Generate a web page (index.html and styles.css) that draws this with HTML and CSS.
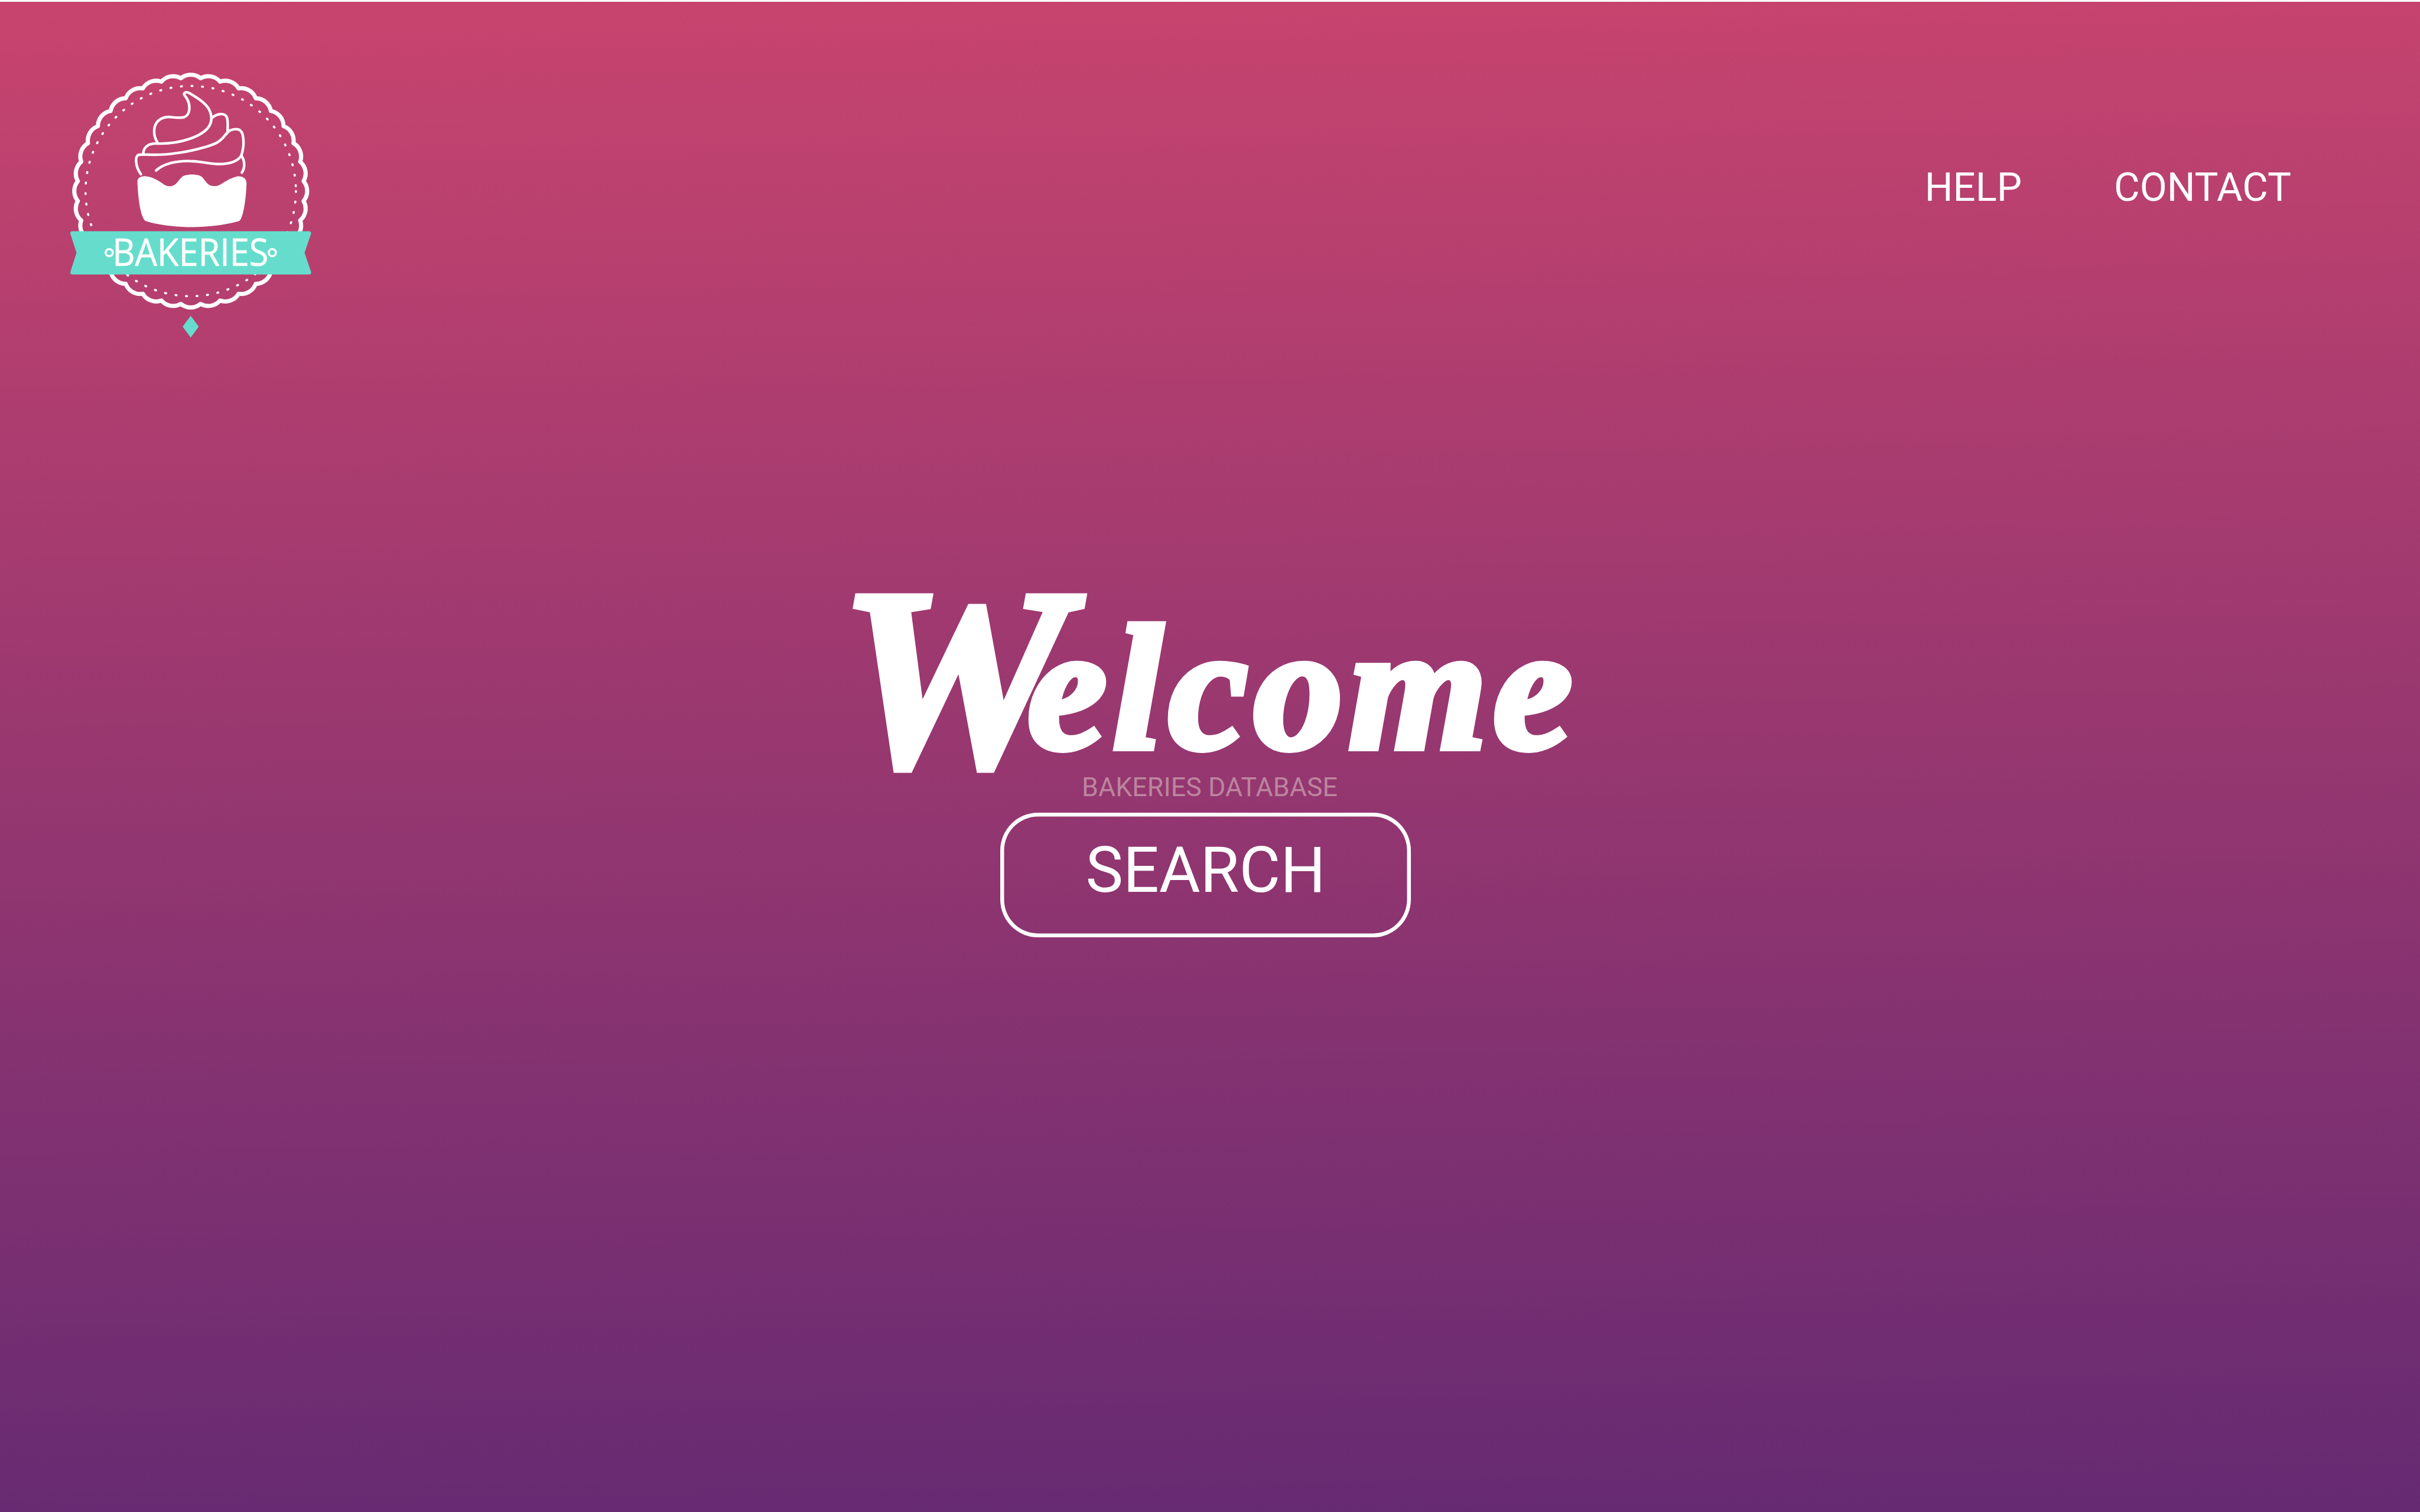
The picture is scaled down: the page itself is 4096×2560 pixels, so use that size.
FILE: index.html
```html
<!DOCTYPE html>
<html lang="en">
<head>
<meta charset="utf-8">
<title>Bakeries</title>
<link rel="stylesheet" href="styles.css">
</head>
<body>
<header class="header">
  <svg class="logo" viewBox="0 0 580 640" role="img" aria-label="Bakeries">
    <g transform="translate(290.4 290.7)" fill="none" stroke="#fff">
      <path stroke-width="9.2" stroke-linejoin="round" d="M-21.8-249A34 34 0 0 1 21.8-249A34 34 0 0 1 64.7-241.5A34 34 0 0 1 105.7-226.6A34 34 0 0 1 143.4-204.8A34 34 0 0 1 176.8-176.8A34 34 0 0 1 204.8-143.4A34 34 0 0 1 226.6-105.7A34 34 0 0 1 241.5-64.7A34 34 0 0 1 249-21.8A34 34 0 0 1 249 21.8A34 34 0 0 1 241.5 64.7A34 34 0 0 1 226.6 105.7A34 34 0 0 1 204.8 143.4A34 34 0 0 1 176.8 176.8A34 34 0 0 1 143.4 204.8A34 34 0 0 1 105.7 226.6A34 34 0 0 1 64.7 241.5A34 34 0 0 1 21.8 249A34 34 0 0 1-21.8 249A34 34 0 0 1-64.7 241.5A34 34 0 0 1-105.7 226.6A34 34 0 0 1-143.4 204.8A34 34 0 0 1-176.8 176.8A34 34 0 0 1-204.8 143.4A34 34 0 0 1-226.6 105.7A34 34 0 0 1-241.5 64.7A34 34 0 0 1-249 21.8A34 34 0 0 1-249-21.8A34 34 0 0 1-241.5-64.7A34 34 0 0 1-226.6-105.7A34 34 0 0 1-204.8-143.4A34 34 0 0 1-176.8-176.8A34 34 0 0 1-143.4-204.8A34 34 0 0 1-105.7-226.6A34 34 0 0 1-64.7-241.5A34 34 0 0 1-21.8-249Z"/>
      <circle r="232" stroke-width="4.8" stroke-linecap="round" stroke-dasharray="2 21.29"/>
    </g>
    <g transform="scale(.3699 .40816)">
      <g class="cream">
        <path d="M586 448C566 420 565 388 570 366C580 330 618 308 665 312C705 316 722 318 745 313C785 300 783 247 764 215C750 193 740 190 748 182C755 175 770 179 780 184C830 211 870 234 893 268C910 298 913 332 897 358C860 416 720 460 585 455C540 453 502 470 502 512"/>
        <path d="M911 318C935 295 985 285 1000 312C1009 330 1005 350 1005 390"/>
        <path d="M488 621C455 580 450 525 475 516C490 511 600 523 690 508C780 500 900 470 940 451C985 430 990 400 1020 384C1060 370 1085 378 1094 405C1105 445 1098 490 1086 522C1060 555 1010 568 940 566C880 562 830 550 780 550C700 548 620 565 579 601"/>
        <path d="M1088 522C1110 550 1108 590 1090 612"/>
      </g>
      <path fill="#fff" d="M467 660C467 640 490 630 520 632C560 637 595 658 615 670C640 690 675 692 697 672C715 658 725 636 745 629C775 621 810 621 840 629C865 638 872 668 898 680C925 690 950 685 970 672C1005 652 1030 640 1060 633C1095 628 1118 645 1118 668C1116 730 1105 830 1082 866Q1078 874 1065 877C900 917 690 917 525 877Q512 874 508 867C480 830 470 730 467 660Z"/>
      <path fill="#66ddcc" d="M80 929H1490Q1504 929 1503 942L1464 1046L1503 1150Q1504 1163 1490 1163H80Q66 1163 67 1150L104 1046L67 942Q66 929 80 929ZM785 1387L833 1445L785 1504L737 1445Z"/>
    </g>
    <g fill="none" stroke="#fff" stroke-width="4.5">
      <circle cx="110.6" cy="426.5" r="7.9"/>
      <circle cx="470.4" cy="426.5" r="7.9"/>
    </g>
    <text class="logo-name" x="117.5" y="455.4" textLength="344.5" lengthAdjust="spacingAndGlyphs">BAKERIES</text>
  </svg>
  <nav class="nav">
    <a>HELP</a>
    <a>CONTACT</a>
  </nav>
</header>
<main class="hero">
  <h1 class="title"><span class="title-initial">W</span><span class="title-rest">elcome</span></h1>
  <p class="subtitle">BAKERIES DATABASE</p>
  <button class="search">SEARCH</button>
</main>
</body>
</html>
```
FILE: styles.css
```css
* { box-sizing: border-box; }

body {
  margin: 0;
  height: 2560px;
  border-top: 3px solid #fff;
  background: linear-gradient(179deg, #c8446e 0%, #652a72 100%) no-repeat;
  color: #fff;
  font-family: Roboto, sans-serif;
  overflow: hidden;
}

.header {
  display: flex;
  justify-content: space-between;
  align-items: flex-start;
  height: 589px;
  padding: 97px 218px 0 100px;
}

.logo { display: block; width: 445px; height: 492px; }

.cream path {
  fill: none;
  stroke: #fff;
  stroke-width: 4.4px;
  stroke-linecap: round;
  stroke-linejoin: round;
  vector-effect: non-scaling-stroke;
}

.logo-name {
  fill: #fff;
  stroke: #fff;
  stroke-width: 0.8px;
  font-family: "Open Sans", "Noto Sans", sans-serif;
  font-size: 83.5px;
}

.nav {
  display: flex;
  gap: 156px;
  margin-top: 177px;
  font-size: 67px;
  line-height: 80px;
}

.hero {
  display: flex;
  flex-direction: column;
  align-items: flex-start;
  padding-top: 339px;
}

.title {
  display: flex;
  align-items: flex-start;
  height: 376px;
  margin: 0 0 0 1420px;
  font-family: "Liberation Serif", serif;
  font-weight: 700;
  font-style: italic;
  line-height: 1;
  -webkit-text-stroke: 12px #fff;
  stroke-linejoin: round;
}

.title-initial { font-size: 436px; }

.title-rest {
  margin: 84px 0 0 -68px;
  font-size: 300px;
  letter-spacing: 11px;
}

.subtitle {
  margin: 0 0 0 1831px;
  color: #bc859e;
  font-size: 44.6px;
  line-height: 52px;
  letter-spacing: 0.15px;
}

.search {
  width: 695px;
  height: 211px;
  margin: 17px 0 0 1693px;
  padding: 0 0 4px;
  border: 0;
  border-radius: 64px;
  box-shadow: inset 0 0 0 6.5px #fff;
  background: none;
  color: #fff;
  font: 107px/127px Roboto, sans-serif;
  padding-bottom: 16px;
}
```
